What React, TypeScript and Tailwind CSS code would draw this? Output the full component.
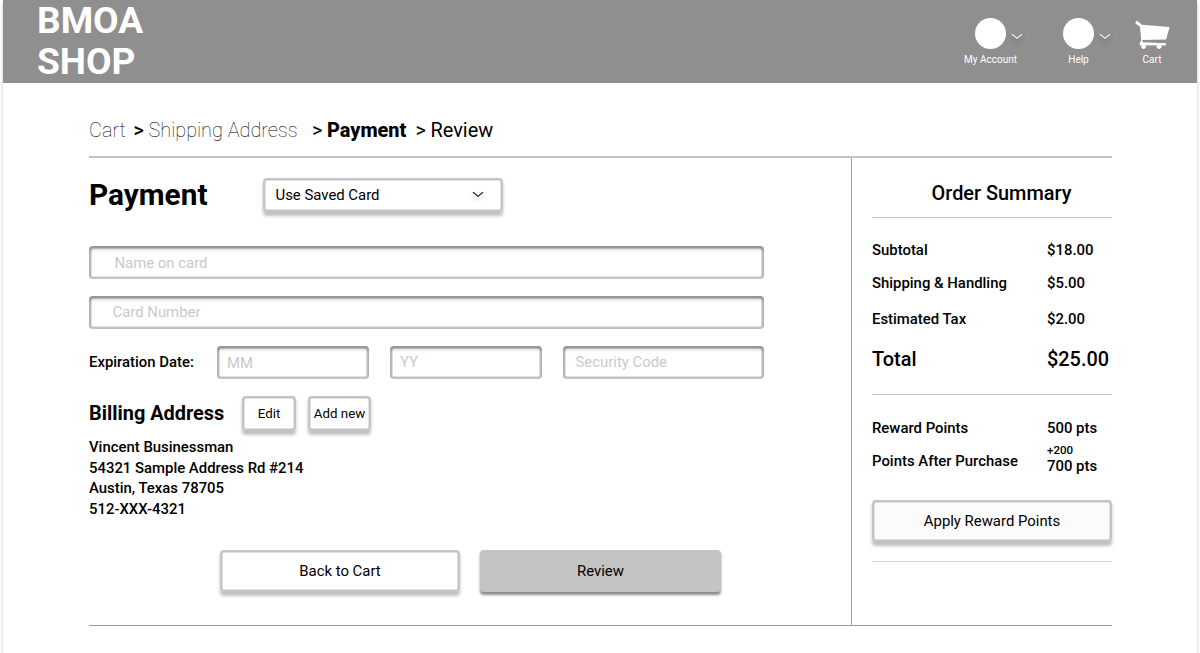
import React from "react";

function Chevron({ className }: { className: string }) {
  return (
    <svg viewBox="0 0 12 7" fill="none" stroke="currentColor" className={className}>
      <path d="M1 1.2l5 4.2L11 1.2" strokeWidth="1.1" />
    </svg>
  );
}

function CartIcon() {
  return (
    <svg viewBox="0 0 106 90" className="h-[30px] w-[35px]" fill="#fff">
      <path d="M1 6L7 2L21 14L105 21L94 59L23 60L22 67L94 70L93 77L14 76L14 70L19 61L15 20L2 10Z" />
      <circle cx="26" cy="80" r="7.5" />
      <circle cx="73" cy="80" r="7.5" />
    </svg>
  );
}

function HeaderItem({ label }: { label: string }) {
  return (
    <div className="flex w-[88px] flex-col items-center pt-[18px]">
      <div className="flex w-full items-center gap-[4.5px] pl-[28.5px]">
        <span className="size-[31px] shrink-0 rounded-full bg-white" />
        <Chevron className="mt-[5px] h-[7px] w-[12px] shrink-0 text-white drop-shadow-[0_3px_2px_rgba(0,0,0,0.25)]" />
      </div>
      <span className="mt-[4.5px] text-[10px] leading-[12px] whitespace-nowrap">{label}</span>
    </div>
  );
}

function Field({ text, className }: { text: string; className: string }) {
  return (
    <div
      className={`flex h-[33px] items-center rounded-[4px] text-[14.9px] text-[#c9c9c9] shadow-[inset_0_3.3px_3.3px_rgba(0,0,0,0.25),inset_0_0_0_2.5px_#c4c4c4] ${className}`}
    >
      {text}
    </div>
  );
}

const raised =
  "rounded-[4px] shadow-[inset_0_0_0_2.5px_#c4c4c4,0_3.3px_3.3px_rgba(0,0,0,0.25)]";

function Button({ text, className }: { text: string; className: string }) {
  return (
    <button className={`flex items-center justify-center whitespace-nowrap ${raised} ${className}`}>
      {text}
    </button>
  );
}

function Row({ label, value, className }: { label: string; value: string; className: string }) {
  return (
    <div className={`flex items-center font-medium ${className}`}>
      <span className="w-[175px]">{label}</span>
      <span>{value}</span>
    </div>
  );
}

export default function App() {
  return (
    <div className="h-[653px] overflow-hidden bg-white px-[3px] font-['Roboto',sans-serif] text-black">
      <div className="h-[660px] bg-white shadow-[0_3.3px_3.3px_rgba(0,0,0,0.25)]">
        <header className="flex h-[83px] justify-between bg-[#8f8f8f] pr-[15.5px] pl-[34px] text-white">
          <h1 className="w-[120px] text-[37.1px] leading-[41px] font-bold">
            BMOA
            <br />
            SHOP
          </h1>
          <nav className="flex">
            <HeaderItem label="My Account" />
            <HeaderItem label="Help" />
            <div className="flex w-[59px] flex-col items-center pt-[19.5px]">
              <CartIcon />
              <span className="mt-[4.5px] text-[10px] leading-[12px]">Cart</span>
            </div>
          </nav>
        </header>

        <main className="ml-[86px] w-[1023px]">
          <div className="flex h-[75px] items-center border-b-2 border-[#c4c4c4] pt-[23px] text-[19.9px] whitespace-pre">
            <span className="w-[44.5px] font-thin">Cart</span>
            <span className="w-[15px] font-medium">&gt;</span>
            <span className="w-[163.5px] font-thin">Shipping Address</span>
            <span className="w-[15px]">&gt;</span>
            <span className="w-[88.5px] font-extrabold">Payment</span>
            <span className="w-[15px]">&gt;</span>
            <span>Review</span>
          </div>

          <div className="flex h-[468px] border-b border-[#a0a0a0]">
            <section className="w-[762px] shrink-0 pt-[20px]">
              <div className="flex h-[34px] items-center">
                <h2 className="w-[173.5px] text-[29.8px] font-bold">Payment</h2>
                <button
                  className={`flex h-[34px] w-[240.5px] items-center justify-between pr-[19px] pl-[13px] text-[14.9px] ${raised}`}
                >
                  Use Saved Card
                  <Chevron className="-mt-[2px] h-[7px] w-[12px] drop-shadow-[0_3px_2px_rgba(0,0,0,0.25)]" />
                </button>
              </div>
              <Field text="Name on card" className="mt-[34px] w-[675px] pt-px pl-[25.5px]" />
              <Field text="Card Number" className="mt-[17px] w-[675px] pl-[23.5px]" />
              <div className="mt-[17px] flex items-center">
                <span className="w-[128px] text-[14.9px] font-medium">Expiration Date:</span>
                <Field text="MM" className="w-[152px] pt-px pl-[10px]" />
                <Field text="YY" className="ml-[21px] w-[152px] pl-[10px]" />
                <Field text="Security Code" className="ml-[21px] w-[201px] pl-[12.5px]" />
              </div>
              <div className="mt-[17px] flex h-[36px] items-start">
                <h3 className="w-[153px] text-[19.9px] leading-[36px] font-bold">Billing Address</h3>
                <Button text="Edit" className="h-[35px] w-[54px] text-[13.3px]" />
                <Button text="Add new" className="ml-[12px] h-[35px] w-[63px] text-[13.3px]" />
              </div>
              <address className="mt-[5px] text-[14.9px] leading-[20.7px] font-medium not-italic">
                Vincent Businessman
                <br />
                54321 Sample Address Rd #214
                <br />
                Austin, Texas 78705
                <br />
                512-XXX-4321
              </address>
              <div className="mt-[30.2px] ml-[131px] flex gap-[20px] text-[14.9px]">
                <Button text="Back to Cart" className="h-[42px] w-[240px]" />
                <button className="flex h-[42px] w-[241px] items-center justify-center rounded-[4px] bg-[#c4c4c4] shadow-[0_2.5px_2.5px_rgba(0,0,0,0.45)]">
                  Review
                </button>
              </div>
            </section>

            <aside className="flex-1 border-l border-[#a0a0a0] pl-[20px] text-[14.9px]">
              <h3 className="flex h-[60px] items-center justify-center border-b border-[#c4c4c4] pt-[13px] pl-[19px] text-[19.9px] font-medium">
                Order Summary
              </h3>
              <Row label="Subtotal" value="$18.00" className="mt-[22px] h-[20px]" />
              <Row label="Shipping & Handling" value="$5.00" className="mt-[13px] h-[20px]" />
              <Row label="Estimated Tax" value="$2.00" className="mt-[16px] h-[20px]" />
              <Row label="Total" value="$25.00" className="mt-[19px] h-[24px] text-[19.9px]" />
              <hr className="mt-[22px] border-[#c4c4c4]" />
              <Row label="Reward Points" value="500 pts" className="mt-[23px] h-[20px]" />
              <div className="mt-[6px] flex h-[32px] items-start font-medium">
                <span className="w-[175px] pt-[8px] leading-[18px]">Points After Purchase</span>
                <span className="-mt-px flex flex-col leading-[19px]">
                  <span className="text-[11.6px] leading-[14px]">+200</span>
                  700 pts
                </span>
              </div>
              <Button text="Apply Reward Points" className="mt-[24px] h-[42px] w-[240px] bg-[#fbfbfb]" />
              <hr className="mt-[19px] border-[#d4d4d4]" />
            </aside>
          </div>
        </main>
      </div>
    </div>
  );
}
